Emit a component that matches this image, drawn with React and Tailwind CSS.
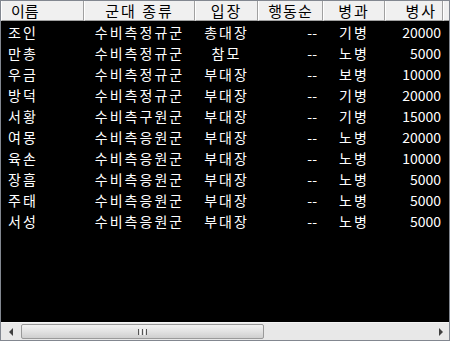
import React from 'react';

const columns = [
  { key: 'name', label: '이름', width: 'w-[83px]', head: 'justify-start pl-[9px]', cell: 'justify-start pl-[7px] tracking-[2px]' },
  { key: 'type', label: '군대 종류', width: 'w-[111px]', head: 'justify-center tracking-[2px]', cell: 'justify-center tracking-[2px]' },
  { key: 'role', label: '입장', width: 'w-[63px]', head: 'justify-center tracking-[2px]', cell: 'justify-center tracking-[2px]' },
  { key: 'order', label: '행동순', width: 'w-[65px]', head: 'justify-center tracking-[1px]', cell: 'justify-end pr-[6px]' },
  { key: 'branch', label: '병과', width: 'w-[62px]', head: 'justify-center tracking-[2px]', cell: 'justify-center tracking-[2px]' },
  { key: 'troops', label: '병사', width: 'w-[58px]', head: 'justify-end pr-[5px] tracking-[2px]', cell: 'justify-end pr-[2px]' },
];

const rows = [
  ['조인', '수비측정규군', '총대장', '--', '기병', '20000'],
  ['만총', '수비측정규군', '참모', '--', '노병', '5000'],
  ['우금', '수비측정규군', '부대장', '--', '보병', '10000'],
  ['방덕', '수비측정규군', '부대장', '--', '기병', '20000'],
  ['서황', '수비측구원군', '부대장', '--', '기병', '15000'],
  ['여몽', '수비측응원군', '부대장', '--', '노병', '20000'],
  ['육손', '수비측응원군', '부대장', '--', '노병', '10000'],
  ['장흠', '수비측응원군', '부대장', '--', '노병', '5000'],
  ['주태', '수비측응원군', '부대장', '--', '노병', '5000'],
  ['서성', '수비측응원군', '부대장', '--', '노병', '5000'],
];

const font = { fontFamily: '"Noto Sans CJK KR", "Noto Sans", sans-serif' };

export default function App() {
  return (
    <div className="w-[450px] h-[341px] bg-[#f0f0f0]" style={font}>
      <div className="w-full h-full border border-[#828790] flex flex-col bg-black">
        {/* header */}
        <div className="flex h-[20px] bg-[#f0f0f0] shrink-0 text-[15px] leading-none text-black">
          {columns.map(c => (
            <div
              key={c.key}
              className={`${c.width} h-full flex items-center border-l border-white border-r border-r-[#a0a0a0] border-b border-b-[#a0a0a0] ${c.head}`}
            >
              {c.label}
            </div>
          ))}
          <div className="flex-1 h-full border-l border-white border-b border-b-[#a0a0a0]"></div>
        </div>

        {/* rows */}
        <div className="flex-1 text-white text-[14px] leading-none">
          {rows.map((r, i) => (
            <div key={i} className="flex h-[21px] items-center">
              {columns.map((c, j) => (
                <div key={c.key} className={`${c.width} flex items-center ${c.cell}`}>
                  {r[j]}
                </div>
              ))}
            </div>
          ))}
        </div>

        {/* horizontal scrollbar */}
        <div className="h-[18px] shrink-0 bg-[#e8e8e8] border-t border-[#f4f4f4] flex items-stretch">
          <div className="w-[20px] flex items-center justify-center">
            <svg width="5" height="8" viewBox="0 0 5 8"><path d="M4 0 L0 4 L4 8 Z" fill="#404040" /></svg>
          </div>
          <div className="w-[243px] my-[1px] rounded-[2px] border border-[#9a9a9a] bg-gradient-to-b from-[#f2f2f2] via-[#e2e2e2] to-[#cfcfcf] flex items-center justify-center">
            <div className="flex gap-[1px]">
              <div className="w-[1px] h-[6px] bg-[#555]"></div>
              <div className="w-[1px] h-[6px] bg-[#f8f8f8]"></div>
              <div className="w-[1px] h-[6px] bg-[#555]"></div>
              <div className="w-[1px] h-[6px] bg-[#f8f8f8]"></div>
              <div className="w-[1px] h-[6px] bg-[#555]"></div>
            </div>
          </div>
          <div className="flex-1"></div>
          <div className="w-[18px] flex items-center justify-center">
            <svg width="5" height="8" viewBox="0 0 5 8"><path d="M1 0 L5 4 L1 8 Z" fill="#404040" /></svg>
          </div>
        </div>
      </div>
    </div>
  );
}
